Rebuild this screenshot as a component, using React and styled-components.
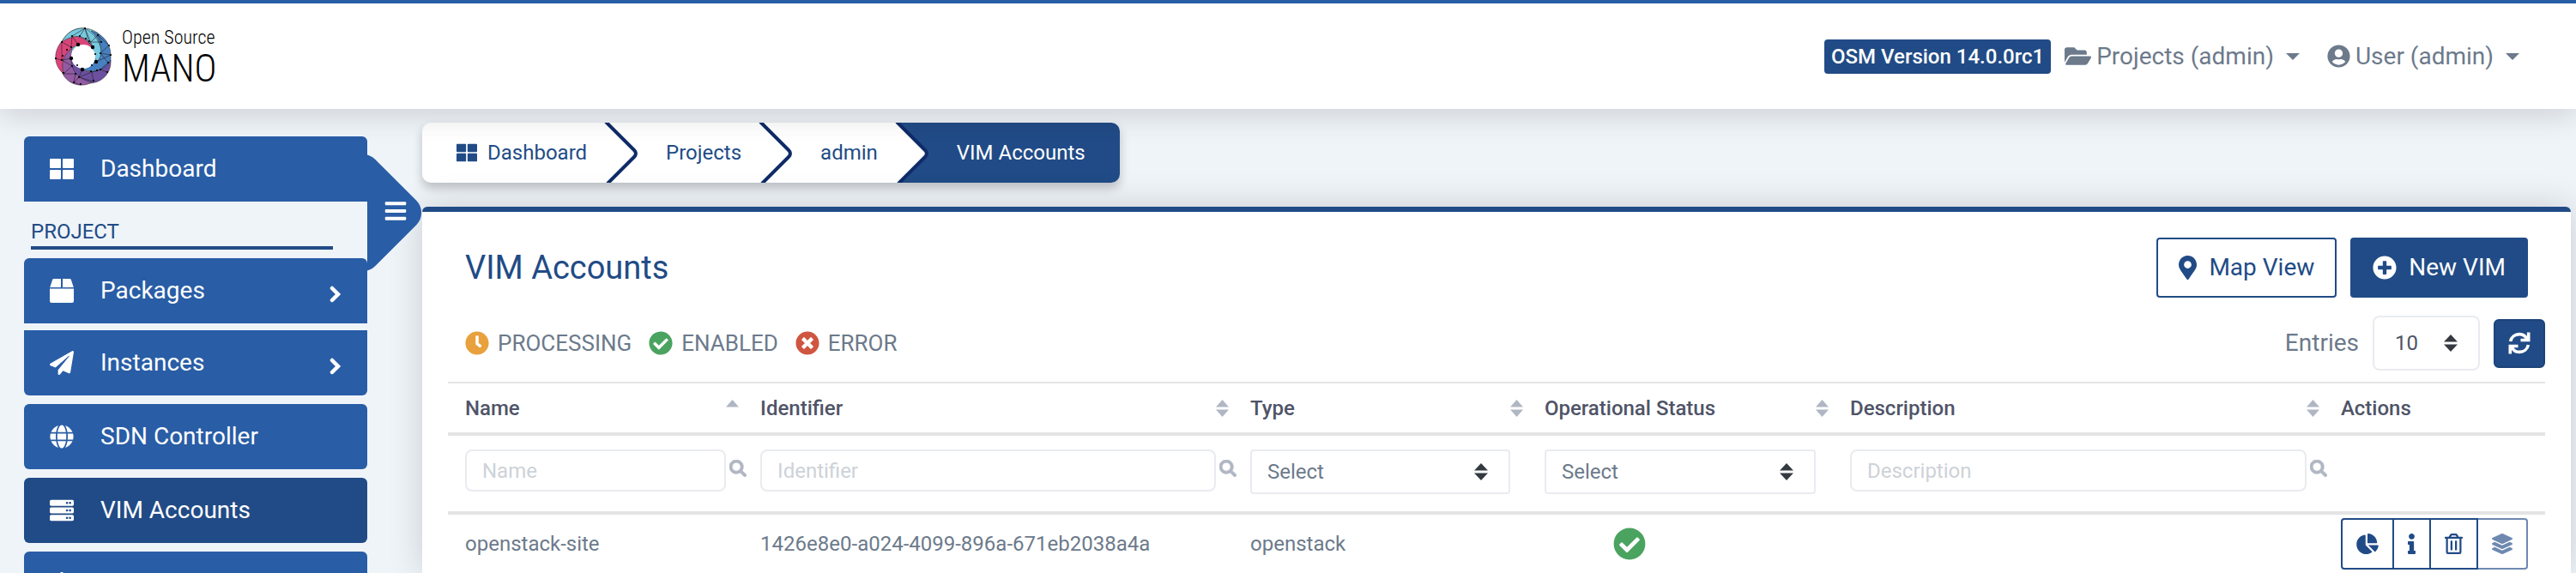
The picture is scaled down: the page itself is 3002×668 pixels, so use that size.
import React from "react";
import styled, { createGlobalStyle, css } from "styled-components";
import {
  FaPaperPlane, FaGlobe, FaServer, FaBars, FaFolderOpen, FaUserCircle,
  FaMapMarkerAlt, FaPlusCircle, FaClock, FaCheckCircle, FaTimesCircle, FaSearch,
  FaChartPie, FaInfo, FaRegTrashAlt, FaLayerGroup, FaDharmachakra,
} from "react-icons/fa";

const c = {
  blue: "#295da6",
  navy: "#214b86",
  edge: "#0f2b68",
  text: "#6c7a8b",
  head: "#4f5467",
  page: "#eff4f9",
  line: "#e4e4e4",
  field: "#e9ebf0",
};

const GlobalStyle = createGlobalStyle`
  *, *::before, *::after { box-sizing: border-box; }
  body {
    margin: 0;
    background: ${c.page};
    color: ${c.text};
    font: 400 24px/36px Roboto, "Liberation Sans", sans-serif;
  }
  button, input, select { font: inherit; color: inherit; margin: 0; }
  a { color: inherit; text-decoration: none; }
  svg { display: block; flex: none; }
`;

const Page = styled.div`
  height: 100vh;
  overflow: hidden;
  display: flex;
  flex-direction: column;
`;

const TopBar = styled.header`
  position: relative;
  z-index: 1;
  flex: none;
  display: flex;
  align-items: center;
  justify-content: space-between;
  height: 127px;
  padding: 0 66px 0 64px;
  border-top: 4px solid ${c.blue};
  background: #fff;
  box-shadow: 0 8px 32px rgba(0, 0, 0, 0.14);
`;

const Brand = styled.a`
  display: flex;
  align-items: center;
  gap: 12px;
  color: #000;
`;

const BrandText = styled.span`
  display: flex;
  flex-direction: column;
`;

const BrandTop = styled.span`
  font: 300 22px/24px "Roboto Condensed", "Liberation Sans Narrow", Roboto, sans-serif;
`;

const BrandName = styled.span`
  margin-top: 4px;
  font: 300 44px/40px "Roboto Condensed", "Liberation Sans Narrow", Roboto, sans-serif;
`;

const Account = styled.nav`
  display: flex;
  align-items: center;
`;

const Version = styled.span`
  height: 40px;
  margin-right: 16px;
  padding: 0 8px;
  border-radius: 4px;
  background: ${c.navy};
  color: #fff;
  font-weight: 500;
  line-height: 40px;
`;

const MenuButton = styled.button`
  display: flex;
  align-items: center;
  gap: 6px;
  padding: 0;
  border: 0;
  background: none;
  font-size: 28px;
  & + & { margin-left: 32px; }
`;

const Caret = styled.span`
  margin-left: 8px;
  border: 8px solid transparent;
  border-top-color: currentColor;
  border-bottom: 0;
`;

const Body = styled.div`
  flex: 1;
  display: flex;
  min-height: 0;
`;

const Sidebar = styled.aside`
  position: relative;
  flex: none;
  width: 492px;
  padding: 32px 64px 0 28px;
`;

const round = {
  top: "6px 6px 0 0",
  bottom: "0 0 6px 6px",
  all: "6px",
};

const NavItem = styled.a`
  position: relative;
  display: flex;
  align-items: center;
  height: 76px;
  margin-bottom: ${(p) => p.$gap ?? 10}px;
  padding: 0 30px;
  border-radius: ${(p) => round[p.$round ?? "all"]};
  background: ${(p) => (p.$active ? c.navy : c.blue)};
  color: #fff;
  font-size: 28px;
`;

const NavLabel = styled.span`
  flex: 1;
  margin-left: 31px;
`;

const Section = styled.h2`
  width: 352px;
  margin: 0 0 10px 8px;
  padding-top: 18px;
  border-bottom: 4px solid ${c.navy};
  color: ${c.navy};
  font-weight: 400;
  font-size: 24px;
  line-height: 34px;
`;

const Toggle = styled.button`
  position: absolute;
  top: 49px;
  left: 428px;
  width: 64px;
  height: 144px;
  padding: 0 0 4px 19px;
  border: 0;
  background: none;
  color: #fff;
  overflow: hidden;
  &::before {
    content: "";
    position: absolute;
    top: 18px;
    left: -59px;
    width: 108px;
    height: 108px;
    border-radius: 20px;
    background: ${c.blue};
    transform: rotate(45deg);
  }
  svg { position: relative; }
`;

const Main = styled.main`
  flex: 1;
  min-width: 0;
  display: flex;
  flex-direction: column;
  padding: 16px 6px 0 0;
`;

const Crumbs = styled.nav`
  align-self: flex-start;
  display: flex;
  height: 70px;
  margin-bottom: 28px;
  border-radius: 10px;
  background: #fff;
  box-shadow: 0 6px 12px rgba(0, 0, 0, 0.22);
  overflow: hidden;
  color: ${c.navy};
`;

const Crumb = styled.a`
  display: flex;
  align-items: center;
  gap: 12px;
  padding: 0 ${(p) => (p.$last ? 40 : 20)}px 0 ${(p) => (p.$first ? 40 : 32)}px;
  ${(p) => p.$last && css`
    background: ${c.navy};
    color: #fff;
  `}
`;

const Panel = styled.section`
  flex: 1;
  min-height: 0;
  padding: 30px 30px 0;
  border-top: 6px solid ${c.navy};
  border-radius: 6px 6px 0 0;
  background: #fff;
  box-shadow: 0 0 40px rgba(0, 0, 0, 0.16);
`;

const PanelHead = styled.div`
  display: flex;
  justify-content: space-between;
  padding: 0 20px;
`;

const Title = styled.h1`
  margin: 12px 0 0;
  color: ${c.navy};
  font-weight: 400;
  font-size: 38px;
  line-height: 46px;
`;

const Group = styled.div`
  display: flex;
  gap: ${(p) => p.$gap}px;
`;

const Action = styled.button`
  display: flex;
  align-items: center;
  gap: 14px;
  height: 70px;
  padding: 0 24px;
  border: 2px solid ${c.navy};
  border-radius: 4px;
  background: ${(p) => (p.$solid ? c.navy : "#fff")};
  color: ${(p) => (p.$solid ? "#fff" : c.navy)};
  font-size: 28px;
`;

const Pin = styled(FaMapMarkerAlt)`
  width: 21px;
  height: 28px;
`;

const Tools = styled.div`
  display: flex;
  justify-content: space-between;
  align-items: center;
  height: 64px;
  margin: 21px 0 13px;
  padding-left: 20px;
  font-size: 26px;
`;

const Status = styled.span`
  display: flex;
  align-items: center;
  gap: 10px;
`;

const Entries = styled.div`
  display: flex;
  align-items: center;
  gap: 16px;
  label { font-size: 28px; }
`;

const SelectWrap = styled.span`
  position: relative;
  display: block;
  font-size: 24px;
  svg {
    position: absolute;
    top: 50%;
    right: 26px;
    margin-top: -10px;
    pointer-events: none;
  }
`;

const Select = styled.select`
  appearance: none;
  display: block;
  width: ${(p) => (p.$page ? "125px" : "100%")};
  height: ${(p) => (p.$page ? 64 : 52)}px;
  padding: 0 ${(p) => (p.$page ? 24 : 18)}px;
  border: 2px solid ${c.field};
  border-radius: ${(p) => (p.$page ? 8 : 4)}px;
  background: #fff;
  color: ${(p) => (p.$page ? c.head : c.text)};
`;

const Refresh = styled.button`
  display: grid;
  place-items: center;
  width: 60px;
  height: 57px;
  padding: 0;
  border: 2px solid #1d4379;
  border-radius: 6px;
  background: ${c.navy};
  color: #fff;
`;

const Table = styled.table`
  width: 100%;
  table-layout: fixed;
  border-collapse: separate;
  border-spacing: 0;
  border-top: 2px solid ${c.line};
`;

const Col = styled.col`
  width: ${(p) => p.$w}%;
`;

const Th = styled.th`
  height: 61px;
  padding: 0 5px 0 20px;
  border-bottom: 4px solid ${c.line};
  color: ${c.head};
  font-weight: 500;
  text-align: left;
`;

const Sorter = styled.span`
  display: flex;
  align-items: center;
  justify-content: space-between;
`;

const FilterCell = styled.td`
  height: 92px;
  padding: 16px 20px 20px;
  border-bottom: 4px solid ${c.line};
  vertical-align: top;
`;

const Search = styled.span`
  display: flex;
  gap: 4px;
  margin-right: -4px;
  svg {
    margin: 12px -20px 0 0;
    color: #b0b6c3;
    stroke: currentColor;
    stroke-width: 20px;
  }
`;

const Input = styled.input`
  flex: 1;
  min-width: 0;
  height: 49px;
  padding: 0 18px;
  border: 2px solid ${c.field};
  border-radius: 8px;
  background: #fff;
  &::placeholder { color: #cdd2d8; opacity: 1; }
`;

const Td = styled.td`
  height: 68px;
  padding: 0 20px;
`;

const State = styled.span`
  display: flex;
  justify-content: center;
  width: 198px;
  color: #4ba360;
`;

const Actions = styled.span`
  display: flex;
`;

const IconButton = styled.button`
  display: grid;
  place-items: center;
  height: 60px;
  padding: 0 16px;
  border: 2px solid ${c.navy};
  background: #fff;
  color: ${c.navy};
  svg { width: ${(p) => p.$w}px; }
  & + & { margin-left: -2px; }
  &:first-child { border-radius: 4px 0 0 4px; }
  &:last-child { border-radius: 0 4px 4px 0; }
  &:disabled { opacity: 0.65; border-left: 0; margin-left: 0; }
`;

const Tiles = ({ size }) => (
  <svg width={size} height={size} viewBox="0 0 28 28" fill="currentColor" aria-hidden="true">
    <rect x="0" y="2" width="13" height="11" rx="1" />
    <rect x="15" y="2" width="13" height="11" rx="1" />
    <rect x="0" y="15" width="13" height="11" rx="1" />
    <rect x="15" y="15" width="13" height="11" rx="1" />
  </svg>
);

const PackageIcon = () => (
  <svg width="28" height="28" viewBox="0 0 28 28" fill="currentColor" aria-hidden="true">
    <path d="M4.800 0H13v10H.2L3 1.400Q3.500 0 4.800 0zM15 0h8.200q1.300 0 1.800 1.400L27.800 10H15zM0 11.500h28V26q0 2-2 2H2q-2 0-2-2z" />
  </svg>
);

const Chevron = () => (
  <svg width="14" height="28" viewBox="0 0 14 28" fill="none" stroke="currentColor" strokeWidth="4.500" strokeLinecap="round" aria-hidden="true">
    <path d="M3 11l7 7-7 7" />
  </svg>
);

const RefreshIcon = () => (
  <svg width="26" height="26" viewBox="0 0 26 26" fill="none" stroke="currentColor" strokeWidth="3.600" aria-hidden="true">
    <path d="M2.600 11C3.600 5.800 8 2.600 13 2.600c4 0 7.300 2.200 9 6M23.700 .5v9H14.500" />
    <path d="M23.400 15C22.400 20.200 18 23.400 13 23.400c-4 0-7.300-2.200-9-6M2.300 25.500v-9h9.200" />
  </svg>
);

const UpDown = ({ color, up, size = 16 }) => (
  <svg width={size} height="20" viewBox="0 0 16 20" fill={color} preserveAspectRatio="none" aria-hidden="true">
    <path d="M8 0l8 8.500H0z" />
    {!up && <path d="M8 20l8-8.500H0z" />}
  </svg>
);

const CrumbArrow = ({ next = "#fff" }) => (
  <svg width="40" height="70" viewBox="0 0 40 70" fill="none" aria-hidden="true">
    <path d="M3 0L35 32Q39 36 35 40L5 70H40V0z" fill={next} />
    <path d="M2 -1L35 32Q39 36 35 40L4 71" stroke={c.edge} strokeWidth="4" />
  </svg>
);

const Ring = () => (
  <svg width="66" height="68" viewBox="0 0 66 68" aria-hidden="true">
    <g stroke="#222" strokeWidth="0.500">
      <path d="M8 17C14 4 26 0 35 1C46 2 55 8 58 18L62 30L48 46Z" fill="#78c9df" />
      <path d="M42 4C55 7 65 18 65 32C66 48 57 56 48 53L32 49L47 40C57 28 54 14 42 4Z" fill="#4780c1" />
      <path d="M65 38C66 54 54 65 40 65C28 67 18 60 17 44L20 36L32 49C44 55 58 50 65 38Z" fill="#6c4f9f" />
      <path d="M43 64C30 71 15 66 9 54C5 42 10 27 20 22L19 36C18 50 28 61 43 64Z" fill="#935ba3" />
      <path d="M10 54C-2 44-2 28 8 16C16 8 32 6 44 23L27 20C12 27 6 38 10 54Z" fill="#da4579" />
      <path d="M35 1C47 8 58 22 52 36L48 42L44 23C36 8 22 7 8 17C14 5 24 0 35 1Z" fill="#78c9df" />
    </g>
    <circle cx="33" cy="34" r="14" fill="#fff" />
    <path d="M8 17L19 23L20 10L27 20M20 10L35 1L29 10M35 1L40 19L50 9L54 17L41 17M35 1L44 23M50 9L63 21L53 30L65 32L48 40M62 41L53 30M62 41L53 49L61 52M53 49L43 52L45 63L28 58L43 52M28 58L32 49M28 58L22 64L30 67M24 54L22 64M24 54L10 54L20 45L8 38L8 17M8 38L19 36M0 36L8 38" fill="none" stroke="#222" strokeWidth="0.600" />
    {[[27, 20], [44, 23], [48, 40], [32, 49], [19, 36]].map(([x, y]) => <circle key={x} cx={x} cy={y} r="2.200" />)}
    {[[8, 17], [20, 10], [29, 10], [35, 1], [36, 13], [40, 16], [50, 9], [54, 17], [63, 21], [53, 30], [47, 31], [65, 32], [62, 41], [43, 44], [53, 49], [49, 50], [42, 51], [61, 52], [45, 62], [28, 58], [24, 54], [22, 64], [30, 66], [10, 53], [20, 45], [26, 44], [8, 38], [1, 36], [9, 33], [14, 26], [19, 23]].map(([x, y]) => <circle key={`${x}-${y}`} cx={x} cy={y} r="1.100" />)}
  </svg>
);

const columns = [
  ["Name", 14.08], ["Identifier", 23.36], ["Type", 14.03],
  ["Operational Status", 14.57], ["Description", 23.4], ["Actions", 10.56],
];

const TextFilter = ({ name }) => (
  <FilterCell>
    <Search>
      <Input placeholder={name} aria-label={name} />
      <FaSearch size={20} />
    </Search>
  </FilterCell>
);

const SelectFilter = ({ name }) => (
  <FilterCell>
    <SelectWrap>
      <Select aria-label={name}><option>Select</option></Select>
      <UpDown color="#343a40" />
    </SelectWrap>
  </FilterCell>
);

export default function App() {
  return (
    <Page>
      <GlobalStyle />
      <TopBar>
        <Brand href="#">
          <Ring />
          <BrandText>
            <BrandTop>Open Source</BrandTop>
            <BrandName>MANO</BrandName>
          </BrandText>
        </Brand>
        <Account>
          <Version>OSM Version 14.0.0rc1</Version>
          <MenuButton><FaFolderOpen size={31} />Projects (admin)<Caret /></MenuButton>
          <MenuButton><FaUserCircle size={27} />User (admin)<Caret /></MenuButton>
        </Account>
      </TopBar>
      <Body>
        <Sidebar>
          <NavItem href="#" $round="top" $gap={0}><Tiles size={28} /><NavLabel>Dashboard</NavLabel></NavItem>
          <Section>PROJECT</Section>
          <NavItem href="#" $round="top" $gap={8}><PackageIcon /><NavLabel>Packages</NavLabel><Chevron /></NavItem>
          <NavItem href="#" $round="bottom"><FaPaperPlane size={28} /><NavLabel>Instances</NavLabel><Chevron /></NavItem>
          <NavItem href="#"><FaGlobe size={28} /><NavLabel>SDN Controller</NavLabel></NavItem>
          <NavItem href="#" $active><FaServer size={28} /><NavLabel>VIM Accounts</NavLabel></NavItem>
          <NavItem href="#"><FaDharmachakra size={28} /></NavItem>
          <Toggle><FaBars size={28} /></Toggle>
        </Sidebar>
        <Main>
          <Crumbs>
            <Crumb href="#" $first><Tiles size={24} />Dashboard</Crumb>
            <CrumbArrow />
            <Crumb href="#">Projects</Crumb>
            <CrumbArrow />
            <Crumb href="#">admin</Crumb>
            <CrumbArrow next={c.navy} />
            <Crumb href="#" $last>VIM Accounts</Crumb>
          </Crumbs>
          <Panel>
            <PanelHead>
              <Title>VIM Accounts</Title>
              <Group $gap={16}>
                <Action><Pin />Map View</Action>
                <Action $solid><FaPlusCircle size={28} />New VIM</Action>
              </Group>
            </PanelHead>
            <Tools>
              <Group $gap={20}>
                <Status><FaClock size={28} color="#e8a13c" />PROCESSING</Status>
                <Status><FaCheckCircle size={28} color="#4ba360" />ENABLED</Status>
                <Status><FaTimesCircle size={28} color="#cf5640" />ERROR</Status>
              </Group>
              <Entries>
                <label htmlFor="entries">Entries</label>
                <SelectWrap>
                  <Select id="entries" $page><option>10</option></Select>
                  <UpDown color="#343a40" />
                </SelectWrap>
                <Refresh aria-label="Refresh"><RefreshIcon /></Refresh>
              </Entries>
            </Tools>
            <Table>
              <colgroup>{columns.map(([name, w]) => <Col key={name} $w={w} />)}</colgroup>
              <thead>
                <tr>
                  {columns.map(([name]) => (
                    <Th key={name}>
                      <Sorter>{name}{name !== "Actions" && <UpDown color="#b0b6c3" size={15} up={name === "Name"} />}</Sorter>
                    </Th>
                  ))}
                </tr>
              </thead>
              <tbody>
                <tr>
                  <TextFilter name="Name" />
                  <TextFilter name="Identifier" />
                  <SelectFilter name="Type" />
                  <SelectFilter name="Operational Status" />
                  <TextFilter name="Description" />
                  <FilterCell />
                </tr>
                <tr>
                  <Td>openstack-site</Td>
                  <Td>1426e8e0-a024-4099-896a-671eb2038a4a</Td>
                  <Td>openstack</Td>
                  <Td><State><FaCheckCircle size={38} /></State></Td>
                  <Td />
                  <Td>
                    <Actions>
                      <IconButton $w={26}><FaChartPie size={24} /></IconButton>
                      <IconButton $w={9}><FaInfo size={24} /></IconButton>
                      <IconButton $w={21}><FaRegTrashAlt size={24} /></IconButton>
                      <IconButton $w={24} disabled><FaLayerGroup size={24} /></IconButton>
                    </Actions>
                  </Td>
                </tr>
              </tbody>
            </Table>
          </Panel>
        </Main>
      </Body>
    </Page>
  );
}
